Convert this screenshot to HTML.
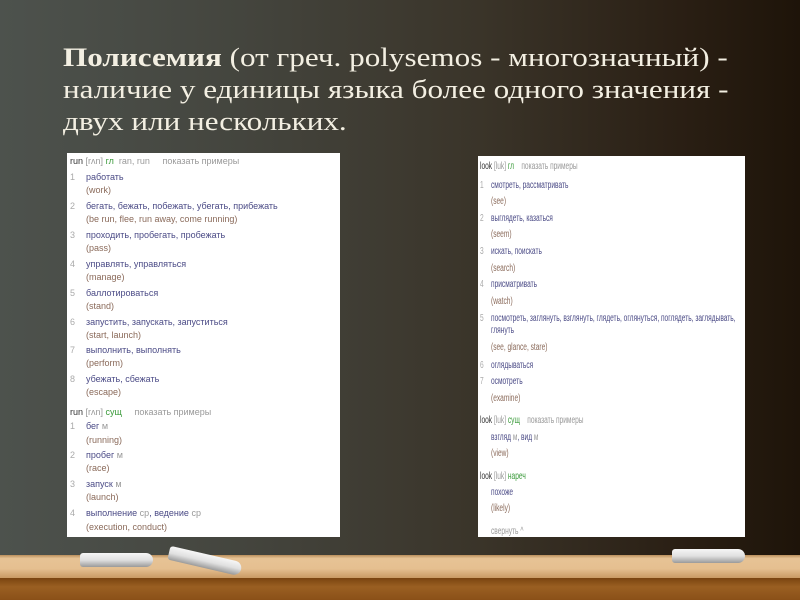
<!DOCTYPE html>
<html><head><meta charset="utf-8"><style>
*{margin:0;padding:0}
body{width:800px;height:600px;overflow:hidden;position:relative;background:linear-gradient(90deg,#4d524d 0%,#44453e 30%,#3a3429 60%,#2a1f14 85%,#1e1409 100%);font-family:"Liberation Sans",sans-serif}
.title{position:absolute;left:63px;top:41px;color:#f3efe2;font-family:"Liberation Serif",serif;font-size:26.5px;line-height:32px;white-space:nowrap;transform:scaleX(1.175);transform-origin:0 0}
.box{position:absolute;background:#fff}
.l{position:absolute;white-space:nowrap;font-size:9px;color:#4b4b86}
.e{color:#8a6a5a}
.n{color:#aaa}
.g{color:#999}
.gr{color:#3a9a3a}
.h{color:#333}
.r .l{transform:scaleX(0.66);transform-origin:0 0;font-size:10px}
.shelf{position:absolute;left:0;top:555px;width:800px;height:23px;background:linear-gradient(180deg,#b98f5c 0%,#e7c395 15%,#e5bf90 60%,#c99a64 100%)}
.shelf2{position:absolute;left:0;top:578px;width:800px;height:22px;background:linear-gradient(180deg,#7a4410 0%,#9a5f22 40%,#8a5018 100%)}
.chalk{position:absolute;height:14px;border-radius:3px 7px 7px 3px;background:linear-gradient(180deg,#f6f6f6 0%,#e0e0e0 50%,#9a9a9a 100%)}
</style></head><body>
<div class="title"><b>Полисемия</b> (от греч. polysemos - многозначный) -<br>наличие у единицы языка более одного значения -<br>двух или нескольких.</div>

<div class="box" style="left:67px;top:153px;width:273px;height:384px">
<div class="l h" style="left:3px;top:3px"><span class="h">run</span> <span class="g">[rʌn]</span> <span class="gr">гл</span> &nbsp;<span class="g">ran, run</span> &nbsp;&nbsp;&nbsp;&nbsp;<span class="g">показать примеры</span></div>
<div class="l" style="left:3px;top:19px"><span class="n">1</span></div><div class="l" style="left:19px;top:19px">работать</div><div class="l e" style="left:19px;top:32px">(work)</div>
<div class="l" style="left:3px;top:48px"><span class="n">2</span></div><div class="l" style="left:19px;top:48px">бегать, бежать, побежать, убегать, прибежать</div><div class="l e" style="left:19px;top:61px">(be run, flee, run away, come running)</div>
<div class="l" style="left:3px;top:77px"><span class="n">3</span></div><div class="l" style="left:19px;top:77px">проходить, пробегать, пробежать</div><div class="l e" style="left:19px;top:90px">(pass)</div>
<div class="l" style="left:3px;top:106px"><span class="n">4</span></div><div class="l" style="left:19px;top:106px">управлять, управляться</div><div class="l e" style="left:19px;top:119px">(manage)</div>
<div class="l" style="left:3px;top:135px"><span class="n">5</span></div><div class="l" style="left:19px;top:135px">баллотироваться</div><div class="l e" style="left:19px;top:148px">(stand)</div>
<div class="l" style="left:3px;top:164px"><span class="n">6</span></div><div class="l" style="left:19px;top:164px">запустить, запускать, запуститься</div><div class="l e" style="left:19px;top:177px">(start, launch)</div>
<div class="l" style="left:3px;top:192px"><span class="n">7</span></div><div class="l" style="left:19px;top:192px">выполнить, выполнять</div><div class="l e" style="left:19px;top:205px">(perform)</div>
<div class="l" style="left:3px;top:221px"><span class="n">8</span></div><div class="l" style="left:19px;top:221px">убежать, сбежать</div><div class="l e" style="left:19px;top:234px">(escape)</div>
<div class="l h" style="left:3px;top:254px">run <span class="g">[rʌn]</span> <span class="gr">сущ</span> &nbsp;&nbsp;&nbsp;&nbsp;<span class="g">показать примеры</span></div>
<div class="l" style="left:3px;top:268px"><span class="n">1</span></div><div class="l" style="left:19px;top:268px">бег <span class="g">м</span></div><div class="l e" style="left:19px;top:282px">(running)</div>
<div class="l" style="left:3px;top:297px"><span class="n">2</span></div><div class="l" style="left:19px;top:297px">пробег <span class="g">м</span></div><div class="l e" style="left:19px;top:310px">(race)</div>
<div class="l" style="left:3px;top:326px"><span class="n">3</span></div><div class="l" style="left:19px;top:326px">запуск <span class="g">м</span></div><div class="l e" style="left:19px;top:339px">(launch)</div>
<div class="l" style="left:3px;top:355px"><span class="n">4</span></div><div class="l" style="left:19px;top:355px">выполнение <span class="g">ср</span>, ведение <span class="g">ср</span></div><div class="l e" style="left:19px;top:369px">(execution, conduct)</div>
</div>

<div class="box r" style="left:478px;top:156px;width:267px;height:381px">
<div class="l h" style="left:2px;top:5px">look <span class="g">[luk]</span> <span class="gr">гл</span> &nbsp;&nbsp;&nbsp;<span class="g">показать примеры</span></div>
<div class="l" style="left:2px;top:24px"><span class="n">1</span></div><div class="l" style="left:13px;top:24px">смотреть, рассматривать</div><div class="l e" style="left:13px;top:40px">(see)</div>
<div class="l" style="left:2px;top:57px"><span class="n">2</span></div><div class="l" style="left:13px;top:57px">выглядеть, казаться</div><div class="l e" style="left:13px;top:73px">(seem)</div>
<div class="l" style="left:2px;top:90px"><span class="n">3</span></div><div class="l" style="left:13px;top:90px">искать, поискать</div><div class="l e" style="left:13px;top:107px">(search)</div>
<div class="l" style="left:2px;top:123px"><span class="n">4</span></div><div class="l" style="left:13px;top:123px">присматривать</div><div class="l e" style="left:13px;top:140px">(watch)</div>
<div class="l" style="left:2px;top:157px"><span class="n">5</span></div><div class="l" style="left:13px;top:157px">посмотреть, заглянуть, взглянуть, глядеть, оглянуться, поглядеть, заглядывать,</div><div class="l" style="left:13px;top:169px">глянуть</div><div class="l e" style="left:13px;top:186px">(see, glance, stare)</div>
<div class="l" style="left:2px;top:204px"><span class="n">6</span></div><div class="l" style="left:13px;top:204px">оглядываться</div>
<div class="l" style="left:2px;top:220px"><span class="n">7</span></div><div class="l" style="left:13px;top:220px">осмотреть</div><div class="l e" style="left:13px;top:237px">(examine)</div>
<div class="l h" style="left:2px;top:259px">look <span class="g">[luk]</span> <span class="gr">сущ</span> &nbsp;&nbsp;&nbsp;<span class="g">показать примеры</span></div>
<div class="l" style="left:13px;top:276px">взгляд <span class="g">м</span>, вид <span class="g">м</span></div><div class="l e" style="left:13px;top:292px">(view)</div>
<div class="l h" style="left:2px;top:315px">look <span class="g">[luk]</span> <span class="gr">нареч</span></div>
<div class="l" style="left:13px;top:331px">похоже</div><div class="l e" style="left:13px;top:347px">(likely)</div>
<div class="l g" style="left:13px;top:370px">свернуть ^</div>
</div>

<div class="shelf"></div><div class="shelf2"></div>
<div class="chalk" style="left:80px;top:553px;width:73px"></div>
<div class="chalk" style="left:168px;top:554px;width:74px;transform:rotate(13deg)"></div>
<div class="chalk" style="left:672px;top:549px;width:73px"></div>
</body></html>
